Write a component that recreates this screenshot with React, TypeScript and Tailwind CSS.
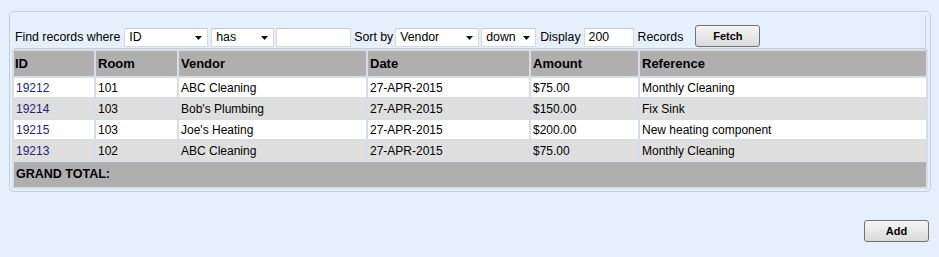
import React from "react";

const rows = [
  { id: "19212", room: "101", vendor: "ABC Cleaning", date: "27-APR-2015", amount: "$75.00", ref: "Monthly Cleaning" },
  { id: "19214", room: "103", vendor: "Bob's Plumbing", date: "27-APR-2015", amount: "$150.00", ref: "Fix Sink" },
  { id: "19215", room: "103", vendor: "Joe's Heating", date: "27-APR-2015", amount: "$200.00", ref: "New heating component" },
  { id: "19213", room: "102", vendor: "ABC Cleaning", date: "27-APR-2015", amount: "$75.00", ref: "Monthly Cleaning" },
];

function FakeSelect({ value, width }: { value: string; width: string }) {
  return (
    <div
      className={`${width} h-[19px] bg-white border border-[#d6d9dd] border-t-[#c4c7cb] flex items-center justify-between pl-[4px] pr-[5px]`}
    >
      <span className="leading-none">{value}</span>
      <svg width="7" height="4" viewBox="0 0 7 4" className="shrink-0">
        <path d="M0 0 H7 L3.5 4 Z" fill="#111" />
      </svg>
    </div>
  );
}

function Btn({ label }: { label: string }) {
  return (
    <button className="w-[65px] h-[22px] rounded-[3px] border border-[#707070] bg-gradient-to-b from-[#f6f6f6] to-[#dadada] text-[11px] font-bold text-black leading-none">
      {label}
    </button>
  );
}

export default function App() {
  return (
    <div className="min-h-screen bg-[#e6f0fc] font-['Liberation_Sans',Arial,sans-serif] text-[12px] text-black pt-[11px] pl-[9px] pr-[8px]">
      <div className="border border-[#c6ced8] rounded-[5px] px-[2px] pt-[3px] pb-[2px]">
        {/* search bar */}
        <div className="mx-[2px] h-[34px] border-r border-b border-[#c8d0da] flex items-end pb-[1px] text-[12.3px]">
          <span className="ml-[1px] mr-[4px] h-[19px] flex items-center">Find records where</span>
          <FakeSelect value="ID" width="w-[84px]" />
          <div className="w-[3px]" />
          <FakeSelect value="has" width="w-[63px]" />
          <div className="w-[2px]" />
          <div className="w-[75px] h-[19px] bg-white border border-[#d6d9dd] border-t-[#c4c7cb]" />
          <span className="ml-[3px] mr-[2px] h-[19px] flex items-center">Sort by</span>
          <FakeSelect value="Vendor" width="w-[84px]" />
          <div className="w-[2px]" />
          <FakeSelect value="down" width="w-[55px]" />
          <span className="ml-[4px] mr-[3px] h-[19px] flex items-center">Display</span>
          <div className="w-[50px] h-[19px] bg-white border border-[#d6d9dd] border-t-[#c4c7cb] flex items-center pl-[4px]">
            200
          </div>
          <span className="ml-[4px] mr-[12px] h-[19px] flex items-center">Records</span>
          <Btn label="Fetch" />
        </div>

        {/* results */}
        <table className="w-full table-fixed border-separate border-spacing-[2px] bg-[#d8dee6]">
          <thead>
            <tr className="bg-[#afafaf] h-[25px] text-[13px] font-bold text-left">
              <th className="w-[80px] pl-[1px] font-bold">ID</th>
              <th className="w-[81px] pl-[2px] font-bold">Room</th>
              <th className="w-[187px] pl-[2px] font-bold">Vendor</th>
              <th className="w-[161px] pl-[2px] font-bold">Date</th>
              <th className="w-[107px] pl-[2px] font-bold">Amount</th>
              <th className="pl-[2px] font-bold">Reference</th>
            </tr>
          </thead>
          <tbody>
            {rows.map((r, i) => (
              <tr key={r.id} className={`h-[19px] ${i % 2 === 0 ? "bg-white" : "bg-[#dfdfdf]"}`}>
                <td className="pl-[2px] p-0 text-[#24237a]">{r.id}</td>
                <td className="pl-[2px] p-0">{r.room}</td>
                <td className="pl-[2px] p-0">{r.vendor}</td>
                <td className="pl-[2px] p-0">{r.date}</td>
                <td className="pl-[2px] p-0">{r.amount}</td>
                <td className="pl-[2px] p-0">{r.ref}</td>
              </tr>
            ))}
            <tr className="h-[25px] bg-[#afafaf]">
              <td colSpan={6} className="pl-[2px] text-[12.5px] font-bold">
                GRAND TOTAL:
              </td>
            </tr>
          </tbody>
        </table>
      </div>

      <div className="flex justify-end mt-[28px] pr-[2px]">
        <Btn label="Add" />
      </div>
    </div>
  );
}
